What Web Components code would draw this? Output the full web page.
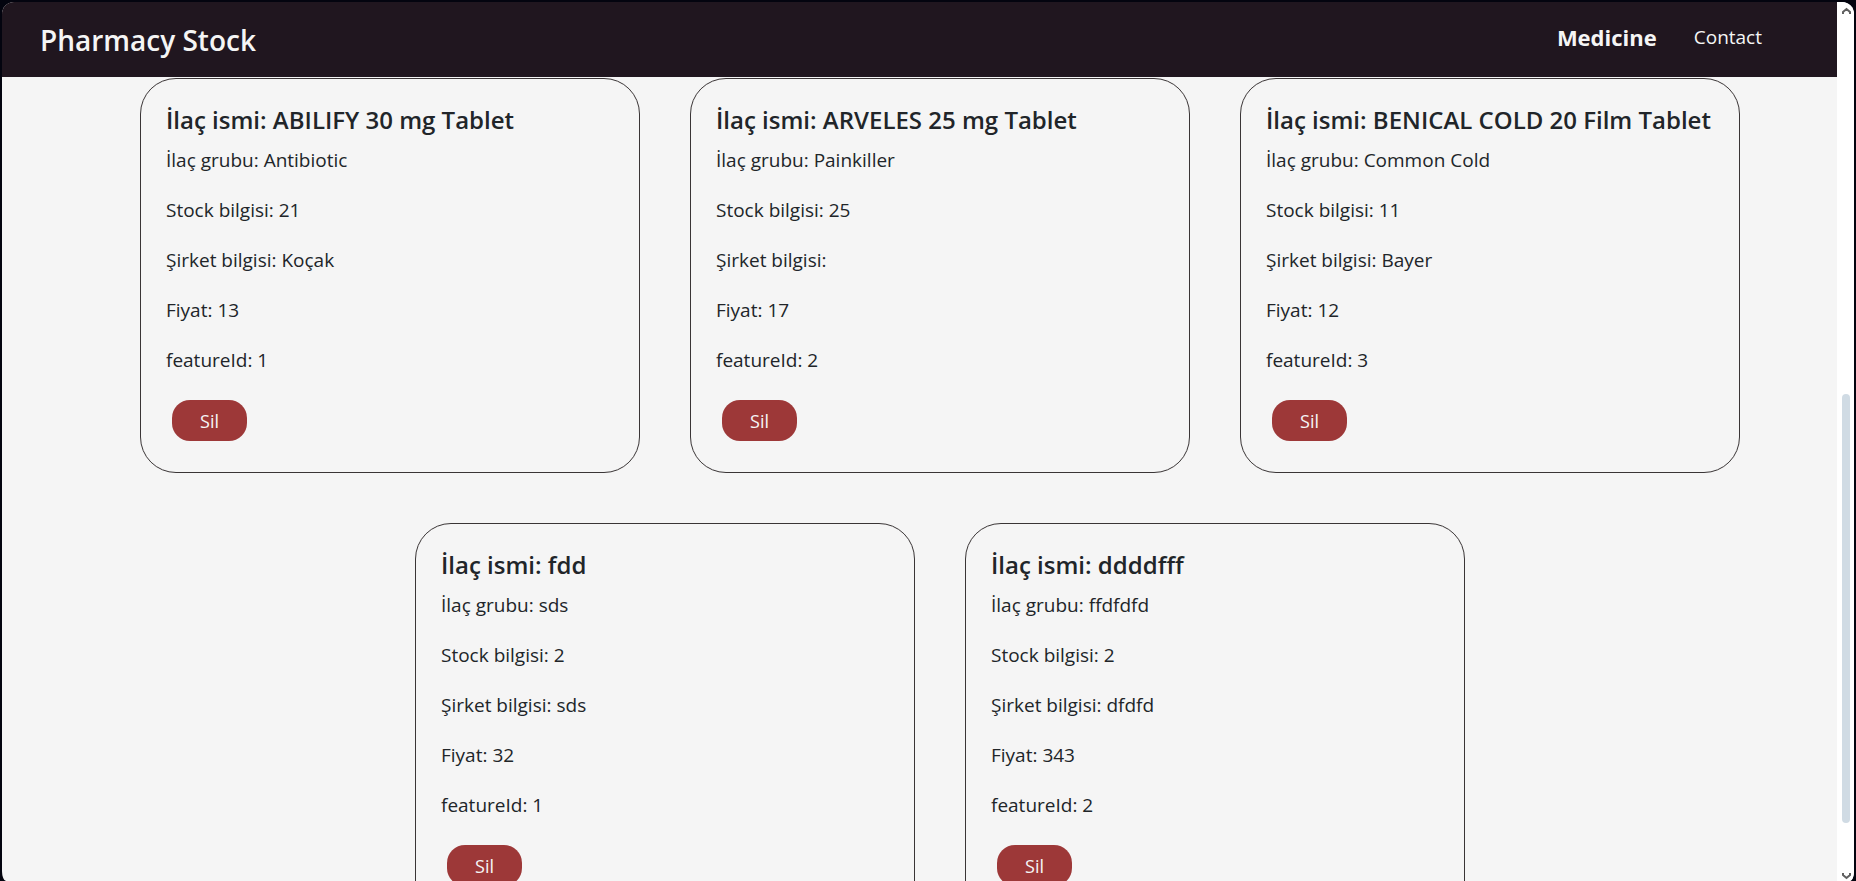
<!DOCTYPE html>
<html lang="tr">
<head>
<meta charset="utf-8">
<title>Pharmacy Stock</title>
<style>
  html, body { height: 100%; }
  body { margin: 0; background: #03040f; font-family: "Open Sans", "Noto Sans", sans-serif; overflow: hidden; }
</style>
</head>
<body>
<app-window>
  <site-header slot="page" brand="Pharmacy Stock">
    <nav-link href="#medicine" active>Medicine</nav-link>
    <nav-link href="#contact">Contact</nav-link>
  </site-header>
  <medicine-list slot="page">
    <medicine-card name="ABILIFY 30 mg Tablet" group="Antibiotic" stock="21" company="Koçak" price="13" feature="1"></medicine-card>
    <medicine-card name="ARVELES 25 mg Tablet" group="Painkiller" stock="25" company="" price="17" feature="2"></medicine-card>
    <medicine-card name="BENICAL COLD 20 Film Tablet" group="Common Cold" stock="11" company="Bayer" price="12" feature="3"></medicine-card>
    <medicine-card name="fdd" group="sds" stock="2" company="sds" price="32" feature="1"></medicine-card>
    <medicine-card name="ddddfff" group="ffdfdfd" stock="2" company="dfdfd" price="343" feature="2"></medicine-card>
  </medicine-list>
  <scroll-rail slot="rail"></scroll-rail>
</app-window>
<script>
class BaseElement extends HTMLElement {
  constructor() { super(); this.attachShadow({ mode: "open" }); }
  connectedCallback() { this.shadowRoot.innerHTML = this.render(); }
  attr(name) { return this.getAttribute(name) || ""; }
}

customElements.define("app-window", class extends BaseElement {
  render() {
    return `<style>
      :host { display: flex; box-sizing: border-box; height: 100vh; padding: 2px 2px 0; }
      .frame { display: flex; flex: 1; min-width: 0; border-radius: 12px 12px 4px 4px / 12px 12px 10px 10px; overflow: hidden; background: #f5f5f5; }
      .page { display: flex; flex-direction: column; flex: 1; min-width: 0; overflow: hidden; }
    </style>
    <div class="frame"><div class="page"><slot name="page"></slot></div><slot name="rail"></slot></div>`;
  }
});

customElements.define("site-header", class extends BaseElement {
  render() {
    return `<style>
      :host { display: block; flex: none; background: #20161f; color: #f5f5f5; }
      header { display: flex; align-items: center; justify-content: space-between; height: 75px; padding: 0 75px 0 38px; }
      h1 { margin: 0; font-size: 28px; line-height: 36px; font-weight: 600; }
      nav { display: flex; align-items: center; gap: 37px; padding-bottom: 6px; }
    </style>
    <header><h1>${this.attr("brand")}</h1><nav><slot></slot></nav></header>`;
  }
});

customElements.define("nav-link", class extends BaseElement {
  render() {
    return `<style>
      :host { display: block; font-size: 19px; line-height: 30px; }
      :host([active]) { font-size: 22px; font-weight: 700; }
      a { color: inherit; text-decoration: none; }
    </style>
    <a href="${this.attr("href")}"><slot></slot></a>`;
  }
});

customElements.define("medicine-list", class extends BaseElement {
  render() {
    return `<style>
      :host { display: block; flex: 1; min-height: 0; overflow: hidden; }
      .cards { display: flex; flex-wrap: wrap; justify-content: center; gap: 50px; padding: 1px 0 50px 41px; }
    </style>
    <div class="cards"><slot></slot></div>`;
  }
});

customElements.define("medicine-card", class extends BaseElement {
  render() {
    return `<style>
      :host { display: block; box-sizing: border-box; width: 500px; padding: 24px 25px; border: 1px solid #3a3536; border-radius: 36px; color: #212529; }
      h2 { margin: 0 0 8px; font-size: 24px; line-height: 34px; font-weight: 600; white-space: nowrap; }
      p { margin: 0 0 20px; font-size: 19px; line-height: 30px; }
      button { display: block; width: 75px; height: 41px; margin: 25px 6px 7px; padding: 0; border: 0; border-radius: 18px; background: #9d3838; color: #f5f5f5; font: inherit; font-size: 18px; }
    </style>
    <h2>İlaç ismi: ${this.attr("name")}</h2>
    <p>İlaç grubu: ${this.attr("group")}</p>
    <p>Stock bilgisi: ${this.attr("stock")}</p>
    <p>Şirket bilgisi: ${this.attr("company")}</p>
    <p>Fiyat: ${this.attr("price")}</p>
    <p>featureId: ${this.attr("feature")}</p>
    <button type="button">Sil</button>`;
  }
});

customElements.define("scroll-rail", class extends BaseElement {
  render() {
    return `<style>
      :host { display: flex; flex-direction: column; align-items: center; box-sizing: border-box; flex: none; width: 17px; background: #fff; }
      svg { display: block; flex: none; width: 9px; height: 17px; margin-left: 2px; fill: none; stroke: #606060; stroke-width: 2; }
      .before { flex: 375; }
      .thumb { flex: 429; width: 8px; border-radius: 4px; background: #d0dbe4; }
      .after { flex: 41; }
    </style>
    <svg viewBox="0 0 9 17"><path d="M1 12V10L4.500 7L8 10V12"/></svg>
    <div class="before"></div><div class="thumb"></div><div class="after"></div>
    <svg viewBox="0 0 9 17"><path d="M1 9V11L4.500 14L8 11V9"/></svg>`;
  }
});
</script>
</body>
</html>
